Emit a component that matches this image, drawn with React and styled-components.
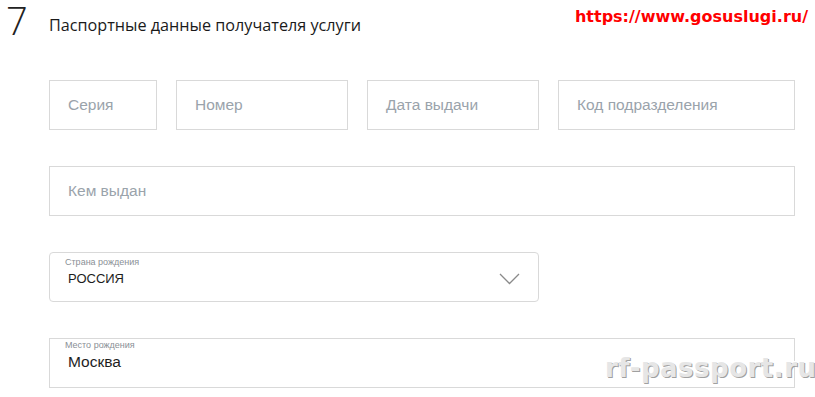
import styled, { createGlobalStyle } from "styled-components";

const GlobalStyle = createGlobalStyle`
  body {
    margin: 0;
    background: #fff;
    font-family: "Liberation Sans", Arial, sans-serif;
  }
`;

const Page = styled.div`
  position: relative;
  width: 815px;
  height: 397px;
  overflow: hidden;
`;

const Header = styled.header`
  display: flex;
  align-items: flex-start;
  height: 80px;
`;

const StepNumber = styled.span`
  min-width: 49px;
  padding-left: 6px;
  box-sizing: border-box;
  font-family: "Open Sans", sans-serif;
  font-weight: 300;
  font-size: 38px;
  line-height: 38px;
  margin-top: 1px;
  color: #222;
`;

const Title = styled.h2`
  margin: 14px 0 0;
  font-family: "Open Sans", sans-serif;
  font-weight: 400;
  font-size: 16.2px;
  color: #1a1a1a;
  white-space: nowrap;
`;

const SourceLink = styled.span`
  margin-left: auto;
  margin-right: 7px;
  margin-top: 7px;
  font-family: "DejaVu Sans", Verdana, sans-serif;
  font-weight: 700;
  font-size: 16px;
  color: #ff0000;
  white-space: nowrap;
`;

const Form = styled.div`
  display: flex;
  flex-direction: column;
  gap: 36px;
  padding-left: 49px;
  width: 746px;
`;

const Row = styled.div`
  display: flex;
  gap: 19px;
`;

const Field = styled.div`
  box-sizing: border-box;
  width: ${(p) => p.$w}px;
  height: 50px;
  border: 1px solid #d9d9d9;
  border-radius: ${(p) => (p.$rounded ? "4px" : "0")};
  display: flex;
  align-items: center;
  padding-left: 18px;
  font-size: 15.5px;
  color: #9aa3ab;
`;

const FilledField = styled(Field)`
  flex-direction: column;
  align-items: flex-start;
  justify-content: flex-start;
  position: relative;
  padding-top: ${(p) => (p.$rounded ? "4px" : "1px")};
  color: #222;
`;

const SmallLabel = styled.span`
  font-size: 9px;
  color: #8a9096;
  line-height: 11px;
  margin-left: -3px;
`;

const Value = styled.span`
  font-size: ${(p) => p.$size}px;
  line-height: 18px;
  margin-top: 2px;
  color: #1d1d1d;
`;

const Chevron = styled.svg`
  position: absolute;
  right: 18px;
  top: 20px;
`;

const Watermark = styled.span`
  position: absolute;
  left: 605px;
  top: 353px;
  font-family: "DejaVu Sans", Verdana, sans-serif;
  font-weight: 700;
  font-size: 26px;
  letter-spacing: 0.5px;
  white-space: nowrap;
  color: #e6e6e6;
  text-shadow: 1px 1px 0 #a0a0a0, -1px -1px 0 #ffffff;
`;

export default function App() {
  return (
    <Page>
      <GlobalStyle />
      <Header>
        <StepNumber>7</StepNumber>
        <Title>Паспортные данные получателя услуги</Title>
        <SourceLink>https://www.gosuslugi.ru/</SourceLink>
      </Header>
      <Form>
        <Row>
          <Field $w={108}>Серия</Field>
          <Field $w={172}>Номер</Field>
          <Field $w={172}>Дата выдачи</Field>
          <Field $w={237}>Код подразделения</Field>
        </Row>
        <Row>
          <Field $w={746}>Кем выдан</Field>
        </Row>
        <Row>
          <FilledField $w={490} $rounded>
            <SmallLabel>Страна рождения</SmallLabel>
            <Value $size={13}>РОССИЯ</Value>
            <Chevron width="21" height="12" viewBox="0 0 21 12">
              <path d="M1 1 L10.5 10.5 L20 1" fill="none" stroke="#8a8a8a" strokeWidth="1.3" />
            </Chevron>
          </FilledField>
        </Row>
        <Row>
          <FilledField $w={746}>
            <SmallLabel>Место рождения</SmallLabel>
            <Value $size={15.5}>Москва</Value>
          </FilledField>
        </Row>
      </Form>
      <Watermark>rf-passport.ru</Watermark>
    </Page>
  );
}
